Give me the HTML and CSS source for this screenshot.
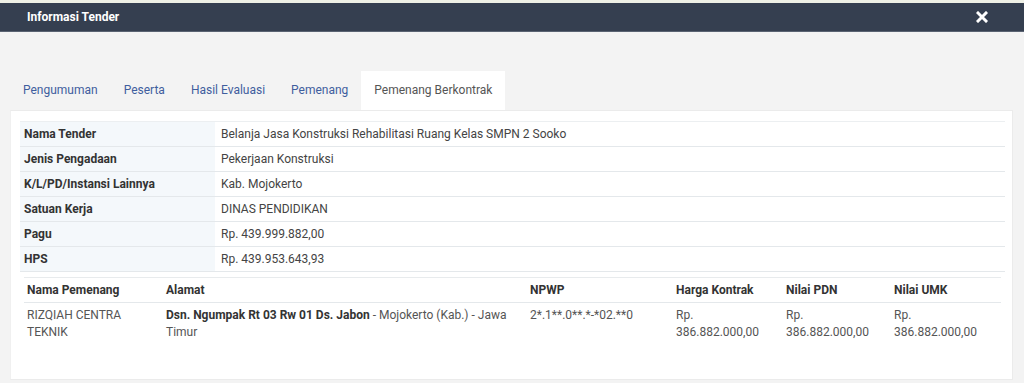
FILE: index.html
```html
<!DOCTYPE html>
<html lang="id">
<head>
<meta charset="utf-8">
<title>Informasi Tender</title>
<link rel="stylesheet" href="styles.css">
</head>
<body>
<div class="topstrip"></div>
<header class="modal-head">
  <h1 class="modal-title">Informasi Tender</h1>
  <button class="close" aria-label="Tutup">
    <svg width="12" height="12" viewBox="0 0 12 12"><path d="M2 2 L10 10 M10 2 L2 10" stroke="#fff" stroke-width="3" stroke-linecap="square"/></svg>
  </button>
</header>
<main class="modal-body">
  <ul class="tabs">
    <li class="tab"><a href="#">Pengumuman</a></li>
    <li class="tab"><a href="#">Peserta</a></li>
    <li class="tab"><a href="#">Hasil Evaluasi</a></li>
    <li class="tab"><a href="#">Pemenang</a></li>
    <li class="tab active"><a href="#">Pemenang Berkontrak</a></li>
  </ul>
  <section class="panel">
    <table class="info">
      <tr><th>Nama Tender</th><td>Belanja Jasa Konstruksi Rehabilitasi Ruang Kelas SMPN 2 Sooko</td></tr>
      <tr><th>Jenis Pengadaan</th><td>Pekerjaan Konstruksi</td></tr>
      <tr><th>K/L/PD/Instansi Lainnya</th><td>Kab. Mojokerto</td></tr>
      <tr><th>Satuan Kerja</th><td>DINAS PENDIDIKAN</td></tr>
      <tr><th>Pagu</th><td>Rp. 439.999.882,00</td></tr>
      <tr><th>HPS</th><td>Rp. 439.953.643,93</td></tr>
    </table>
    <table class="winners">
      <colgroup>
        <col class="c1"><col class="c2"><col class="c3"><col class="c4"><col class="c5"><col class="c6">
      </colgroup>
      <thead>
        <tr><th>Nama Pemenang</th><th>Alamat</th><th>NPWP</th><th>Harga Kontrak</th><th>Nilai PDN</th><th>Nilai UMK</th></tr>
      </thead>
      <tbody>
        <tr>
          <td>RIZQIAH CENTRA TEKNIK</td>
          <td><strong>Dsn. Ngumpak Rt 03 Rw 01 Ds. Jabon</strong> - Mojokerto (Kab.) - Jawa Timur</td>
          <td>2*.1**.0**.*-*02.**0</td>
          <td class="money">Rp. 386.882.000,00</td>
          <td class="money">Rp. 386.882.000,00</td>
          <td class="money">Rp. 386.882.000,00</td>
        </tr>
      </tbody>
    </table>
  </section>
</main>
</body>
</html>
```
FILE: styles.css
```css
* { box-sizing: border-box; }
html, body { margin: 0; padding: 0; }
body {
  background: #f3f3f3;
  font-family: Roboto, "Liberation Sans", Arial, sans-serif;
  font-size: 12px;
  line-height: 17px;
  color: #444;
  overflow: hidden;
}
.topstrip { height: 3px; background: #eef0e6; }
.modal-head {
  height: 29px;
  background: #353f50;
  display: flex;
  align-items: center;
  justify-content: space-between;
  padding: 0 36px 0 27px;
  border-bottom: 1px solid #5a6372;
}
.modal-title {
  margin: 0;
  font-size: 12px;
  font-weight: 700;
  color: #fff;
  line-height: 17px;
}
.close {
  border: 0;
  background: transparent;
  padding: 0;
  width: 12px;
  height: 12px;
  display: flex;
}
.modal-body { padding: 39px 11px 3px 10px; }
.tabs {
  list-style: none;
  margin: 0;
  padding: 0;
  display: flex;
  height: 39px;
}
.tab a {
  display: block;
  height: 39px;
  line-height: 39px;
  padding: 0 13px;
  color: #3f5e9e;
  text-decoration: none;
}
.tab.active a { background: #fff; color: #555; }
.panel {
  background: #fff;
  height: 270px;
  border: 1px solid #ebebeb;
  border-left-color: #f0f0f0;
  padding: 10px 7px 0 9px;
}
table { border-collapse: collapse; width: 100%; }
.info { border-top: 1px solid #eceff1; }
.info th, .info td {
  text-align: left;
  padding: 4px 4px 3px;
  border-bottom: 1px solid #e4e8eb;
  vertical-align: top;
}
.info th {
  width: 195px;
  background: #f4f8fb;
  color: #333;
  font-weight: 700;
}
.info td { color: #444; padding-left: 6px; }
.winners {
  margin: 5px 4px 0;
  width: calc(100% - 8px);
  table-layout: fixed;
  border-top: 1px solid #e8ebed;
}
.winners .c1 { width: 139px; }
.winners .c2 { width: 364px; }
.winners .c3 { width: 146px; }
.winners .c4 { width: 110px; }
.winners .c5 { width: 108px; }
.winners .c6 { width: auto; }
.winners th, .winners td {
  text-align: left;
  padding: 4px 3px 3px;
  vertical-align: top;
}
.winners th {
  color: #333;
  font-weight: 700;
  border-bottom: 1px solid #e4e8eb;
}
.winners td { color: #555; padding-top: 4px; }
.winners td.money { padding-right: 12px; }
.winners td strong { color: #333; font-weight: 700; }
```
